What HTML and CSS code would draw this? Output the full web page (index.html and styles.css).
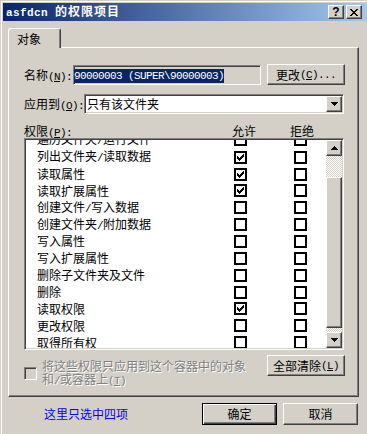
FILE: index.html
```html
<!DOCTYPE html>
<html lang="zh-CN">
<head>
<meta charset="utf-8">
<title>asfdcn 的权限项目</title>
<link rel="stylesheet" href="styles.css">
</head>
<body>
<svg class="defs" width="0" height="0">
  <symbol id="tick" viewBox="0 0 7 7"><path d="M0 2h1v3H0zM1 3h1v3H1zM2 4h1v3H2zM3 3h1v3H3zM4 2h1v3H4zM5 1h1v3H5zM6 0h1v3H6z"/></symbol>
  <symbol id="up" viewBox="0 0 7 4"><path d="M3 0h1v1H3zM2 1h3v1H2zM1 2h5v1H1zM0 3h7v1H0z"/></symbol>
  <symbol id="down" viewBox="0 0 7 4"><path d="M0 0h7v1H0zM1 1h5v1H1zM2 2h3v1H2zM3 3h1v1H3z"/></symbol>
</svg>

<div class="window">
  <div class="titlebar">
    <span class="title"><span class="hw">asfdcn </span>的权限项目</span>
    <span class="capbtn help">?</span>
    <span class="capbtn close"><svg width="8" height="7" viewBox="0 0 8 7"><path d="M0 0h2v1H0zM6 0h2v1H6zM1 1h2v1H1zM5 1h2v1H5zM2 2h4v1H2zM3 3h2v1H3zM2 4h4v1H2zM1 5h2v1H1zM5 5h2v1H5zM0 6h2v1H0zM6 6h2v1H6z"/></svg></span>
  </div>

  <div class="tabs"><div class="tab">对象</div></div>

  <div class="pane">
    <div class="row-name">
      <span class="lbl lbl-name">名称<span class="hw">(<u>N</u>):</span></span>
      <div class="textbox"><span class="sel hw">90000003 (SUPER\90000003)</span></div>
      <span class="btn btn-change">更改<span class="hw">(<u>C</u>)...</span></span>
    </div>

    <div class="row-apply">
      <span class="lbl lbl-apply">应用到<span class="hw">(<u>O</u>):</span></span>
      <div class="combo">
        <span class="combo-text">只有该文件夹</span>
        <span class="btn combo-btn"><svg width="7" height="4"><use href="#down"/></svg></span>
      </div>
    </div>

    <div class="perm-head">
      <span class="ph-name">权限<span class="hw">(<u>P</u>):</span></span>
      <span class="ph-allow">允许</span>
      <span class="ph-deny">拒绝</span>
    </div>

    <div class="list">
      <div class="items">
        <div class="rows">
          <div class="row"><span class="nm">遍历文件夹<span class="hw">/</span>运行文件</span><span class="cb"></span><span class="cb"></span></div>
          <div class="row"><span class="nm">列出文件夹<span class="hw">/</span>读取数据</span><span class="cb"><svg width="7" height="7"><use href="#tick"/></svg></span><span class="cb"></span></div>
          <div class="row"><span class="nm">读取属性</span><span class="cb"><svg width="7" height="7"><use href="#tick"/></svg></span><span class="cb"></span></div>
          <div class="row"><span class="nm">读取扩展属性</span><span class="cb"><svg width="7" height="7"><use href="#tick"/></svg></span><span class="cb"></span></div>
          <div class="row"><span class="nm">创建文件<span class="hw">/</span>写入数据</span><span class="cb"></span><span class="cb"></span></div>
          <div class="row"><span class="nm">创建文件夹<span class="hw">/</span>附加数据</span><span class="cb"></span><span class="cb"></span></div>
          <div class="row"><span class="nm">写入属性</span><span class="cb"></span><span class="cb"></span></div>
          <div class="row"><span class="nm">写入扩展属性</span><span class="cb"></span><span class="cb"></span></div>
          <div class="row"><span class="nm">删除子文件夹及文件</span><span class="cb"></span><span class="cb"></span></div>
          <div class="row"><span class="nm">删除</span><span class="cb"></span><span class="cb"></span></div>
          <div class="row"><span class="nm">读取权限</span><span class="cb"><svg width="7" height="7"><use href="#tick"/></svg></span><span class="cb"></span></div>
          <div class="row"><span class="nm">更改权限</span><span class="cb"></span><span class="cb"></span></div>
          <div class="row"><span class="nm">取得所有权</span><span class="cb"></span><span class="cb"></span></div>
        </div>
      </div>
      <div class="scrollbar">
        <span class="btn sb-btn"><svg width="7" height="4"><use href="#up"/></svg></span>
        <span class="sb-track sb-top"></span>
        <span class="btn sb-thumb"></span>
        <span class="sb-track sb-bottom"></span>
        <span class="btn sb-btn"><svg width="7" height="4"><use href="#down"/></svg></span>
      </div>
    </div>

    <div class="options">
      <div class="inherit">
        <span class="cb-3d"></span>
        <span class="disabled">将这些权限只应用到这个容器中的对象<br>和<span class="hw">/</span>或容器上<span class="hw">(<u>T</u>)</span></span>
      </div>
      <span class="btn btn-clear">全部清除<span class="hw">(<u>L</u>)</span></span>
    </div>
  </div>

  <div class="footer">
    <span class="note">这里只选中四项</span>
    <span class="btn btn-ok">确定</span>
    <span class="btn btn-cancel">取消</span>
  </div>
</div>
</body>
</html>
```

FILE: styles.css
```css
body {margin: 0; width: 367px; height: 434px; overflow: hidden; background: #d4d0c8; font-family: "Noto Sans CJK SC", sans-serif; font-size: 12px; line-height: 14px; color: #000;}
.defs {position: absolute; width: 0; height: 0;}
.hw {font-family: "Liberation Mono", monospace; font-size: 11px; letter-spacing: -0.6px;}
u {text-decoration-thickness: 1px; text-underline-offset: 1px;}
svg {display: block; fill: #000;}

/* window frame + caption */
.window {width: 372px; height: 440px; box-sizing: border-box; padding: 3px 0 0 3px; box-shadow: inset 1px 1px #d4d0c8, inset 2px 2px #fff;}
.titlebar {display: flex; align-items: center; height: 18px; padding: 0 10px 0 3px; background: linear-gradient(to right, #0a246a, #a6caf0);}
.title {color: #fff; font-weight: bold; letter-spacing: 1px;}
.title .hw {font-weight: bold; letter-spacing: 0.4px;}
.capbtn {display: flex; align-items: center; justify-content: center; width: 16px; height: 14px; box-sizing: border-box; background: #d4d0c8; border: 1px solid; border-color: #fff #404040 #404040 #fff; box-shadow: inset -1px -1px #808080;}
.help {margin-left: auto; font-family: "Liberation Sans", sans-serif; font-weight: bold; font-size: 12px; line-height: 12px;}
.close {margin-left: 2px;}

/* 3d bits */
.btn {display: flex; align-items: center; justify-content: center; box-sizing: border-box; background: #d4d0c8; border: 1px solid; border-color: #fff #404040 #404040 #fff; box-shadow: inset -1px -1px #808080; white-space: nowrap;}

/* tab */
.tabs {display: flex; margin: 7px 0 0 5px;}
.tab {position: relative; z-index: 1; width: 53px; height: 20px; box-sizing: border-box; margin-bottom: -1px; padding-left: 8px; background: #d4d0c8; border: 1px solid; border-bottom: 0; border-color: #fff #404040 #fff #fff; border-radius: 3px 3px 0 0; box-shadow: inset -1px 0 #808080; line-height: 19px;}
.pane {margin-left: 5px; width: 351px; height: 350px; box-sizing: border-box; padding: 16px 0 0 15px; border: 1px solid; border-color: #fff #404040 #404040 #fff; box-shadow: inset -1px -1px #808080;}

/* name / apply rows */
.row-name {display: flex; align-items: flex-start; height: 21px;}
.lbl {line-height: 21px; white-space: nowrap; flex: none;}
.lbl-name {width: 49px;}
.lbl-apply {width: 60px; line-height: 20px;}
.textbox {width: 188px; height: 20px; margin-top: 1px; box-sizing: border-box; padding: 1px 0 0 0; border: 1px solid; border-color: #808080 #fff #fff #808080; box-shadow: inset 1px 1px #404040, inset -1px -1px #d4d0c8; white-space: nowrap;}
.sel {display: inline-block; height: 14px; line-height: 14px; margin-top: 1px; background: #0a246a; color: #fff;}
.btn-change {width: 78px; height: 21px; margin-left: 6px;}
.row-apply {display: flex; margin-top: 9px; height: 20px;}
.combo {display: flex; align-items: center; width: 260px; height: 20px; box-sizing: border-box; padding: 0 0 0 1px; background: #fff; border: 1px solid; border-color: #808080 #fff #fff #808080; box-shadow: inset 1px 1px #404040, inset -1px -1px #d4d0c8;}
.combo-text {flex: 1; margin-left: 1px;}
.combo-btn {width: 16px; height: 16px; margin-right: 1px;}

/* permission list */
.perm-head {display: flex; margin-top: 10px; height: 14px; line-height: 13px; white-space: nowrap;}
.ph-name {width: 208px;}
.ph-allow {width: 58px;}
.list {display: flex; width: 320px; height: 212px; box-sizing: border-box; background: #fff; border: 1px solid; border-color: #808080 #fff #fff #808080; box-shadow: inset 1px 1px #404040, inset -1px -1px #d4d0c8; padding: 1px;}
.items {flex: 1; overflow: hidden;}
.rows {margin-top: -9px;}
.row {display: flex; align-items: center; height: 16.85px; padding-left: 11px;}
.row:first-child {height: 17.85px;}
.nm {width: 197px; white-space: nowrap;}
.cb {display: flex; align-items: center; justify-content: center; width: 13px; height: 13px; box-sizing: border-box; border: 2px solid #000; background: #fff;}
.cb + .cb {margin-left: 47px;}
.scrollbar {display: flex; flex-direction: column; width: 16px;}
.sb-btn {height: 16px; flex: none;}
.sb-track {background: repeating-conic-gradient(#fff 0 25%, #d4d0c8 0 50%) 0 0 / 2px 2px;}
.sb-top {height: 21px;}
.sb-thumb {height: 151px; flex: none;}
.sb-bottom {flex: 1;}

/* bottom of pane */
.options {display: flex; width: 321px; margin-top: 5px;}
.inherit {display: flex; align-items: center; margin-top: 4px;}
.cb-3d {width: 13px; height: 13px; box-sizing: border-box; margin-right: 5px; background: #d4d0c8; border: 1px solid; border-color: #808080 #fff #fff #808080; box-shadow: inset 1px 1px #404040, inset -1px -1px #d4d0c8;}
.disabled {color: #808080; text-shadow: 1px 1px #fff; line-height: 13px; white-space: nowrap;}
.btn-clear {width: 78px; height: 21px; margin-left: auto;}

/* footer */
.footer {display: flex; align-items: center; height: 22px; margin-top: 6px; padding-left: 41px;}
.note {width: 158px; color: #00f;}
.btn-ok, .btn-cancel {width: 75px; height: 22px;}
.btn-ok {border-color: #000; box-shadow: inset 1px 1px #fff, inset -1px -1px #404040, inset -2px -2px #808080;}
.btn-cancel {margin-left: 6px;}
```
